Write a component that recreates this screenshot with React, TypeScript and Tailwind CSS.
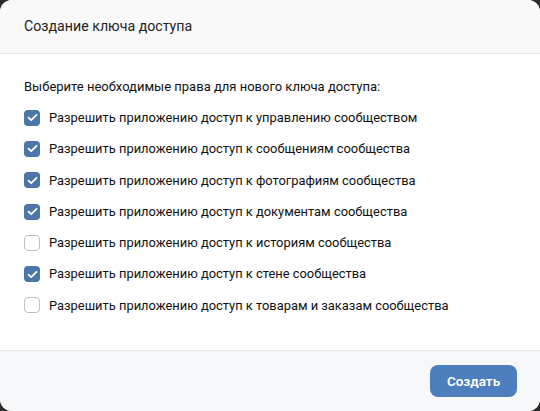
import React from 'react';

const permissions = [
  { label: 'Разрешить приложению доступ к управлению сообществом', checked: true },
  { label: 'Разрешить приложению доступ к сообщениям сообщества', checked: true },
  { label: 'Разрешить приложению доступ к фотографиям сообщества', checked: true },
  { label: 'Разрешить приложению доступ к документам сообщества', checked: true },
  { label: 'Разрешить приложению доступ к историям сообщества', checked: false },
  { label: 'Разрешить приложению доступ к стене сообщества', checked: true },
  { label: 'Разрешить приложению доступ к товарам и заказам сообщества', checked: false },
];

const Checkbox: React.FC<{ checked: boolean }> = ({ checked }) =>
  checked ? (
    <span className="flex h-[16px] w-[16px] items-center justify-center rounded-[4px] bg-[#4a76a8]">
      <svg width="11" height="9" viewBox="0 0 11 9" fill="none">
        <path d="M1.5 4.6 L4.2 7.2 L9.5 1.8" stroke="white" strokeWidth="1.8" strokeLinecap="round" strokeLinejoin="round" />
      </svg>
    </span>
  ) : (
    <span className="block h-[16px] w-[16px] rounded-[4px] border-[1.5px] border-[#b8c1cc] bg-white" />
  );

export default function App() {
  return (
    <div className="h-[411px] w-[540px] bg-[#2b2b2b]" style={{ fontFamily: 'Roboto, "Liberation Sans", sans-serif' }}>
      <div className="flex h-full flex-col overflow-hidden rounded-[12px] bg-white">
        <div className="flex h-[54px] items-center border-b border-[#e4e6ea] bg-[#f9f9fa] px-6 text-[14.2px] text-[#222]">
          Создание ключа доступа
        </div>
        <div className="flex-1 px-6 pt-[17px]">
          <div className="flex h-[31px] items-center text-[13px] text-[#111]">
            Выберите необходимые права для нового ключа доступа:
          </div>
          {permissions.map((p, i) => (
            <label key={i} className="flex h-[31.3px] items-center gap-[9px] text-[12.9px] text-[#111]">
              <Checkbox checked={p.checked} />
              <span>{p.label}</span>
            </label>
          ))}
        </div>
        <div className="flex h-[61px] items-center justify-end border-t border-[#e4e6ea] bg-[#f7f8fa] px-[23px]">
          <button className="h-[32px] w-[87px] rounded-[8px] bg-[#4d7fbf] text-[13.5px] font-semibold text-white">
            Создать
          </button>
        </div>
      </div>
    </div>
  );
}
